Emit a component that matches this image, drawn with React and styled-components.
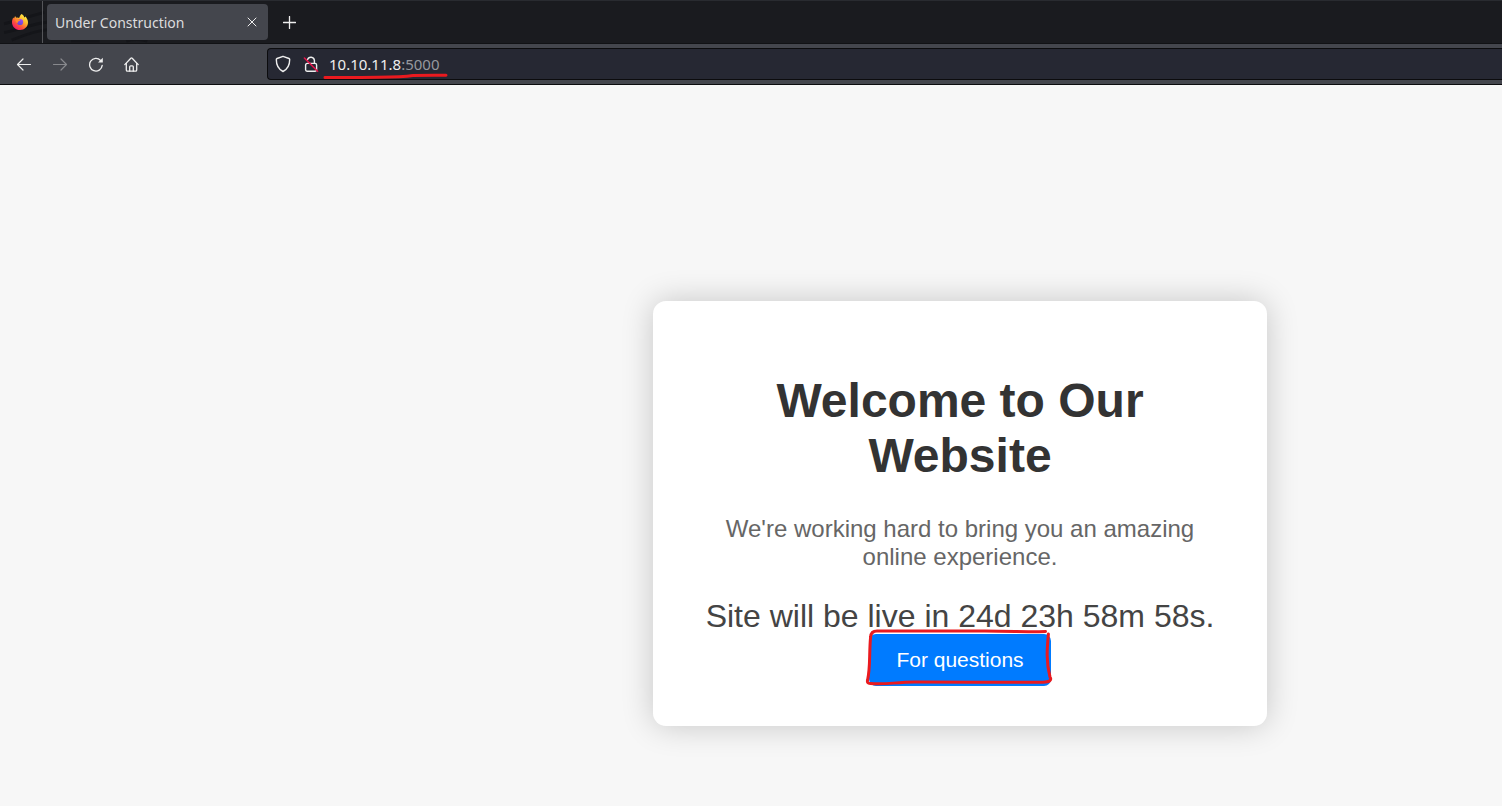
import React from 'react';
import styled, { createGlobalStyle } from 'styled-components';

const App = () => {
  return (
    <>
      <GlobalStyle />
      <Browser>
        <TabStrip>
          <StripArt viewBox="0 0 180 44" aria-hidden="true">
            <path d="M0 24 C12 21 26 16 42 12" />
            <path d="M0 33 C14 31 28 24 46 22" />
            <path d="M8 41 C18 37 32 31 46 30" />
            <path d="M70 42 L100 42 M128 42 Q138 39 150 42" />
          </StripArt>
          <BrandSlot>
            <FirefoxLogo />
          </BrandSlot>
          <Tab>
            <TabTitle>Under Construction</TabTitle>
            <TabClose aria-label="Close tab">
              <Icon width="10" height="10" viewBox="0 0 10 10" $stroke={1}>
                <path d="M1 1 L9 9 M9 1 L1 9" />
              </Icon>
            </TabClose>
          </Tab>
          <NewTab aria-label="New tab">
            <Icon width="13" height="13" viewBox="0 0 13 13" $stroke={1.3}>
              <path d="M6.5 0.5 V12.5 M0.5 6.5 H12.5" />
            </Icon>
          </NewTab>
        </TabStrip>

        <NavBar>
          <NavButtons>
            <NavButton aria-label="Back">
              <Icon width="16" height="16" viewBox="0 0 16 16" $stroke={1.2}>
                <path d="M14.5 8.5 H1.5 M7 3 L1.5 8.5 L7 14" />
              </Icon>
            </NavButton>
            <NavButton aria-label="Forward" disabled>
              <Icon width="16" height="16" viewBox="0 0 16 16" $stroke={1.2}>
                <path d="M1.5 8.5 H14.5 M9 3 L14.5 8.5 L9 14" />
              </Icon>
            </NavButton>
            <NavButton aria-label="Reload">
              <Icon width="16" height="16" viewBox="0 0 16 16" $stroke={1.3}>
                <path d="M14.2 9.4 A6.3 6.3 0 1 1 12.6 4.5 L13.4 5.3" />
                <path d="M14.8 1.8 V6.6 H10 Z" fill="currentColor" stroke="none" />
              </Icon>
            </NavButton>
            <NavButton aria-label="Home">
              <Icon width="16" height="16" viewBox="0 0 16 16" $stroke={1.3}>
                <path d="M0.8 8.6 L6.8 2.2 Q7.5 1.6 8.2 2.2 L14.2 8.6" />
                <path d="M2.3 7.4 V14 Q2.3 15.2 3.5 15.2 H11.5 Q12.7 15.2 12.7 14 V7.4" />
                <path d="M5.7 15.2 V10.8 Q5.7 9.8 6.7 9.8 H8.3 Q9.3 9.8 9.3 10.8 V15.2" />
              </Icon>
            </NavButton>
          </NavButtons>
          <AddressBar>
            <Icon width="16" height="18" viewBox="0 0 16 18" $stroke={1.4}>
              <path d="M8 1.3 L14 3.5 Q14.7 3.8 14.7 4.6 C14.7 10.6 12.4 14.4 8 16.5 C3.6 14.4 1.3 10.6 1.3 4.6 Q1.3 3.8 2 3.5 Z" />
            </Icon>
            <Icon width="16" height="18" viewBox="0 0 16 18" $stroke={1.4}>
              <path d="M4.6 4.6 A3.5 3.5 0 0 1 11.4 5.4 V8.2" />
              <path d="M4.4 8.4 H12 Q13.6 8.4 13.6 10 V14.8 Q13.6 16.2 12.2 16.2 H4 Q2.6 16.2 2.6 14.8 V10.2 Q2.6 8.4 4.4 8.4" />
              <path d="M1.4 3 L14.6 16.2" stroke="#e2144a" strokeWidth="1.6" />
            </Icon>
            <Address>
              10.10.11.8<Port>:5000</Port>
              <Underline viewBox="0 0 126 8" aria-hidden="true">
                <path d="M2 5.4 Q30 5.6 55 5.2 T90 3.4 Q105 3 123 3.2" />
              </Underline>
            </Address>
          </AddressBar>
        </NavBar>
      </Browser>

      <Page>
        <Card>
          <Title>Welcome to Our Website</Title>
          <Message>We're working hard to bring you an amazing online experience.</Message>
          <Countdown>Site will be live in 24d 23h 58m 58s.</Countdown>
          <ButtonWrap>
            <SupportButton>For questions</SupportButton>
            <Outline viewBox="0 0 190 58" aria-hidden="true">
              <path d="M180.5 2.6 C160 2.8 150 2.2 120 2 C80 1.8 50 2.4 12 2 Q6 2 5.6 8 C4 25 5.5 38 2.6 51 Q1.6 54.6 5.4 54.4 C20 56.2 30 53 50 53 C90 53.4 140 53 178 53.2 Q188 52.8 185 48 C181 33 182 20 183.4 5" />
            </Outline>
          </ButtonWrap>
        </Card>
      </Page>
    </>
  );
};

const FirefoxLogo = () => {
  return (
    <svg width="18" height="18" viewBox="0 0 18 18" role="img" aria-label="Firefox">
      <defs>
        <linearGradient id="flame" x1="0.85" y1="0.1" x2="0.2" y2="0.95">
          <stop offset="0" stopColor="#fff04a" />
          <stop offset="0.35" stopColor="#ffb52b" />
          <stop offset="0.65" stopColor="#ff5a36" />
          <stop offset="1" stopColor="#f0156e" />
        </linearGradient>
        <linearGradient id="globe" x1="0.7" y1="0" x2="0.3" y2="1">
          <stop offset="0" stopColor="#a94df0" />
          <stop offset="1" stopColor="#5b45d6" />
        </linearGradient>
      </defs>
      <path
        fill="url(#flame)"
        d="M10.6 1 C12.2 2 13 3.2 13.3 4.4 C14 4.2 14.1 3.7 14 3.3 C16 5 17 7.2 17 9.5 C17 13.8 13.4 17 9 17 C4.6 17 1 13.6 1 9.2 C1 7.4 1.5 5.8 2.4 4.5 L3 5.4 L4.1 3 L5.2 4.7 C6.4 4.4 7.3 4.6 8.1 5.1 C8.6 3.6 9.4 2 10.6 1 Z"
      />
      <circle cx="9.1" cy="9" r="3.1" fill="url(#globe)" />
      <path fill="#ff8a2a" d="M4.4 6.5 C6 5.6 8.4 6 9.2 7.2 C8.7 8 7.7 7.9 7.2 8.4 C6.7 9 7 9.6 6.5 10 C5 9.6 4.2 8 4.4 6.5 Z" />
    </svg>
  );
};

export default App;

const GlobalStyle = createGlobalStyle`
  * {
    box-sizing: border-box;
  }

  body {
    margin: 0;
    background: #f7f7f7;
    font-family: "Liberation Sans", Arial, sans-serif;
  }

  button {
    margin: 0;
    padding: 0;
    border: none;
    background: none;
    color: inherit;
    font-family: inherit;
    cursor: pointer;
  }
`;

const Browser = styled.header`
  color: #eeeeee;
  font-family: "Noto Sans", sans-serif;
`;

const TabStrip = styled.div`
  position: relative;
  display: flex;
  align-items: center;
  height: 44px;
  background: #1a1b1f;
  border-top: 1px solid #292b30;
  border-bottom: 1px solid #111215;
`;

const StripArt = styled.svg`
  position: absolute;
  left: 0;
  top: 0;
  width: 180px;
  height: 42px;
  fill: none;
  stroke: #141519;
  stroke-width: 3;
`;

const BrandSlot = styled.div`
  position: relative;
  display: flex;
  align-items: center;
  justify-content: center;
  width: 43px;
  height: 100%;
  padding-right: 2px;
  border-right: 1px solid #55565a;
`;

const Tab = styled.div`
  position: relative;
  display: flex;
  align-items: center;
  justify-content: space-between;
  width: 221px;
  height: 36px;
  margin-left: 4px;
  padding: 0 11px 0 8px;
  border-radius: 4px;
  background: #44464d;
`;

const TabTitle = styled.span`
  padding-top: 2px;
  color: #dcdcde;
  font-size: 14px;
  line-height: 20px;
`;

const TabClose = styled.button`
  display: flex;
`;

const NewTab = styled.button`
  display: flex;
  margin-left: 15px;
`;

const NavBar = styled.div`
  display: flex;
  align-items: center;
  height: 41px;
  background: #44464d;
  border-bottom: 1px solid #0c0c0e;
`;

const NavButtons = styled.nav`
  display: flex;
  gap: 20px;
  width: 267px;
  padding-left: 16px;
`;

const NavButton = styled.button`
  display: flex;

  &:disabled {
    opacity: 0.4;
    cursor: default;
  }
`;

const Icon = styled.svg`
  flex: none;
  fill: none;
  stroke: currentColor;
  stroke-width: ${props => props.$stroke};
  stroke-linecap: round;
  stroke-linejoin: round;
`;

const AddressBar = styled.div`
  flex: 1;
  display: flex;
  align-items: center;
  gap: 12px;
  height: 32px;
  padding-left: 7px;
  border: 1px solid #0c0c0e;
  border-right: none;
  border-radius: 4px 0 0 4px;
  background: #262833;
`;

const Address = styled.span`
  position: relative;
  margin-left: -2px;
  font-size: 15px;
  line-height: 20px;
`;

const Port = styled.span`
  color: #97989e;
`;

const Underline = styled.svg`
  position: absolute;
  left: -6px;
  top: 18px;
  width: 126px;
  height: 8px;
  fill: none;
  stroke: #ea1a1f;
  stroke-width: 3;
  stroke-linecap: round;
`;

const Page = styled.main`
  display: flex;
  justify-content: center;
  padding: 216px 0 80px 418px;
`;

const Card = styled.section`
  width: 100%;
  max-width: 614px;
  padding: 40px;
  border-radius: 13px;
  background: #ffffff;
  box-shadow: 0 0 32px rgba(0, 0, 0, 0.2);
  text-align: center;
`;

const Title = styled.h1`
  margin: 32px 0;
  color: #333333;
  font-size: 48px;
  line-height: 55px;
`;

const Message = styled.p`
  margin: 0 0 27px;
  color: #666666;
  font-size: 24px;
  line-height: 28px;
`;

const Countdown = styled.div`
  color: #444444;
  font-size: 32px;
  line-height: 36px;
`;

const ButtonWrap = styled.div`
  position: relative;
  width: fit-content;
  margin: 0 auto;
`;

const SupportButton = styled.button`
  display: block;
  && {
    padding: 14px 27px;
    border-radius: 7px;
    background: #007bff;
    color: #ffffff;
  }
  font-size: 21px;
  line-height: 24px;
`;

const Outline = styled.svg`
  position: absolute;
  left: -4px;
  top: -5px;
  width: 190px;
  height: 58px;
  fill: none;
  stroke: #ea1a1f;
  stroke-width: 3;
  stroke-linecap: round;
  stroke-linejoin: round;
`;
